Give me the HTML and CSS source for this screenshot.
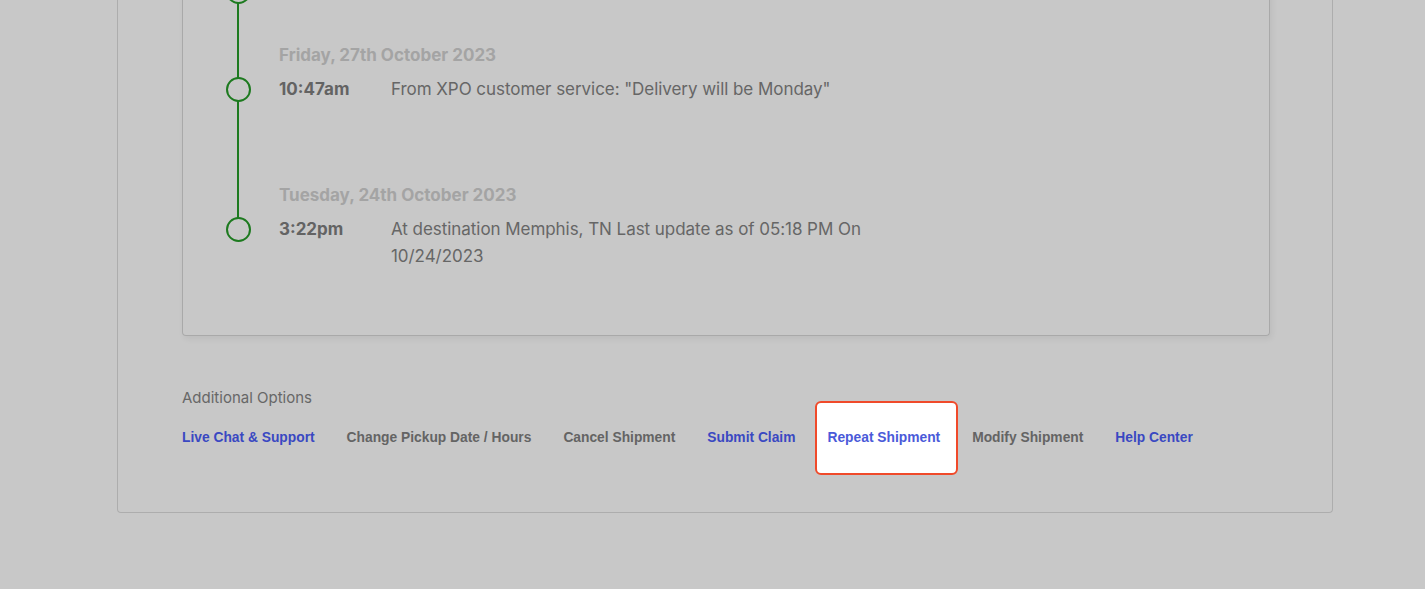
FILE: index.html
```
<!DOCTYPE html>
<html lang="en">
<head>
<meta charset="utf-8">
<title>Shipment tracking</title>
<link rel="stylesheet" href="styles.css">
</head>
<body>
<div class="outer">
  <div class="inner">
    <div class="timeline">
      <div class="stub"><span class="dot"></span></div>
      <div class="group">
        <div class="date">Friday, 27th October 2023</div>
        <div class="row">
          <span class="dot"></span>
          <span class="time">10:47am</span>
          <span class="desc">From XPO customer service: "Delivery will be Monday"</span>
        </div>
      </div>
      <div class="group">
        <div class="date">Tuesday, 24th October 2023</div>
        <div class="row">
          <span class="dot"></span>
          <span class="time">3:22pm</span>
          <span class="desc">At destination Memphis, TN Last update as of 05:18 PM On<br>10/24/2023</span>
        </div>
      </div>
    </div>
  </div>
  <div class="options">
    <div class="options-title">Additional Options</div>
    <div class="links">
      <a class="link blue">Live Chat &amp; Support</a>
      <a class="link grey">Change Pickup Date / Hours</a>
      <a class="link grey">Cancel Shipment</a>
      <a class="link blue">Submit Claim</a>
      <a class="link active">Repeat Shipment</a>
      <a class="link grey">Modify Shipment</a>
      <a class="link blue">Help Center</a>
    </div>
  </div>
</div>
</body>
</html>
```
FILE: styles.css
```
* { box-sizing: border-box; }
html, body { margin: 0; padding: 0; }
body {
  background: #c8c8c8;
  font-family: Inter, "Liberation Sans", sans-serif;
  width: 1425px;
  height: 589px;
  overflow: hidden;
}
.outer {
  margin-left: 117px;
  width: 1216px;
  margin-top: -98px;
  border: 1px solid #adadad;
  border-top: none;
  border-radius: 0 0 4px 4px;
  padding: 0 0 66px 64px;
}
.inner {
  width: 1088px;
  margin-top: 40px;
  border: 1px solid #a9a9a9;
  border-top: none;
  border-radius: 0 0 4px 4px;
  box-shadow: 2px 3px 6px rgba(0,0,0,0.06);
  padding: 0 0 65px 43px;
}
.timeline {
  position: relative;
  padding-top: 37px;
}
.timeline::before {
  content: "";
  position: absolute;
  left: 11px;
  top: 0;
  width: 2px;
  height: 290px;
  background: #1d7a1f;
}
.dot {
  display: block;
  width: 25px;
  height: 25px;
  border: 2px solid #1d7a1f;
  border-radius: 50%;
  background: #c8c8c8;
  position: relative;
  z-index: 1;
}
.stub { height: 24px; }
.group { margin-top: 40px; }
.group + .group { margin-top: 80px; }
.date {
  margin-left: 53px;
  font-size: 17px;
  line-height: 24px;
  font-weight: 700;
  color: #a4a4a4;
}
.row {
  display: grid;
  grid-template-columns: 24px 112px 1fr;
  column-gap: 29px;
  margin-top: 9px;
  align-items: start;
}
.row .dot { margin-top: 0.5px; grid-column: 1; }
.row .time { grid-column: 2; }
.row .desc { grid-column: 3; margin-left: -29px; }
.time {
  font-size: 17px;
  line-height: 27px;
  font-weight: 700;
  color: #636363;
}
.desc {
  font-size: 17px;
  line-height: 27px;
  color: #666;
  letter-spacing: -0.05px;
}
.options { padding-top: 52px; }
.options-title {
  font-size: 15px;
  line-height: 20px;
  color: #676767;
}
.links {
  display: flex;
  gap: 32px;
  margin-top: 22px;
  align-items: center;
}
.link {
  font-family: "Liberation Sans", Arial, sans-serif;
  font-weight: 700;
  font-size: 13.8px;
  line-height: 16px;
  cursor: pointer;
}
.link.blue { color: #3a48c2; }
.link.grey { color: #646464; }
.link.active {
  color: #4a5ad9;
  position: relative;
  z-index: 0;
}
.link.active::before {
  content: "";
  position: absolute;
  left: -12px;
  right: -18px;
  top: -29px;
  bottom: -29px;
  background: #fff;
  border: 2px solid #f04a2a;
  border-radius: 6px;
  z-index: -1;
}
```
